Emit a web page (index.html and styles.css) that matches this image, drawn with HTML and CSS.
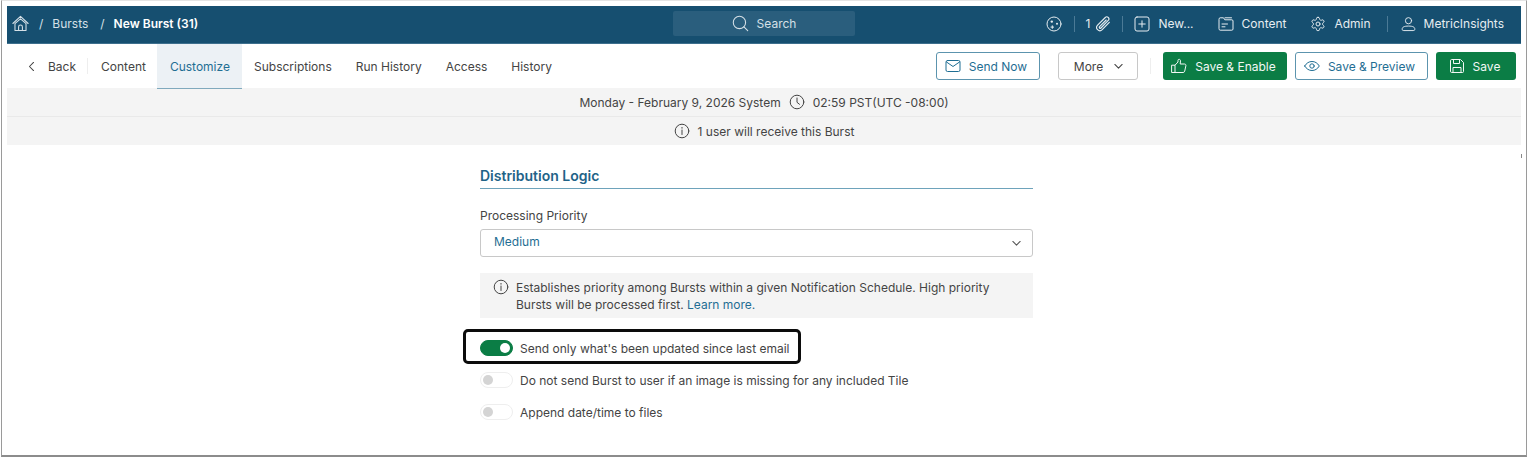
FILE: index.html
```html
<!DOCTYPE html>
<html lang="en">
<head>
    <meta charset="UTF-8">
    <title>New Burst (31)</title>
    <link rel="stylesheet" href="styles.css">
</head>
<body>
    <div class="frame">
        <header class="topbar">
            <div class="crumbs">
                <svg class="ico home" viewBox="0 0 16 16"><path d="M.8 8 8 1.300 15.200 8M3 7.800 8 3.600l5 4.200M2.800 8v6.600h10.400V8M6.200 14.600v-3.400a1.800 1.800 0 0 1 3.600 0v3.400"/></svg>
                <span class="sep">/</span>
                <span>Bursts</span>
                <span class="sep last">/</span>
                <strong>New Burst (31)</strong>
            </div>
            <div class="search">
                <svg class="ico" viewBox="0 0 16 16"><circle cx="7" cy="7" r="5.800"/><path d="m11.200 11.200 3.600 3.600"/></svg>
                <span>Search</span>
            </div>
            <nav class="toplinks">
                <svg class="ico" viewBox="0 0 16 16"><circle cx="8" cy="8" r="7"/><circle cx="5.800" cy="5.600" r="1.200" class="dot"/><circle cx="11" cy="7.800" r="1" class="dot"/><path d="M6.300 9.800v2.600M5 11.100h2.600"/></svg>
                <span class="bar"></span>
                <span class="count">1</span>
                <svg class="ico clip" viewBox="2 1 12 14"><path d="M13.500 6.500 7.300 13a2.800 2.800 0 0 1-4-4L10 2.300a1.800 1.800 0 0 1 2.600 2.600L6.200 11.500a.8.800 0 0 1-1.200-1.200L10.800 4.500"/></svg>
                <span class="bar"></span>
                <a class="toplink"><svg class="ico" viewBox="0 0 16 16"><rect x="1" y="1" width="14" height="14" rx="2"/><path d="M8 4.800v6.400M4.800 8h6.400"/></svg>New...</a>
                <a class="toplink"><svg class="ico" viewBox="0 0 16 16"><path d="M1 3a1.200 1.200 0 0 1 1.200-1.200h3.300l1.300 2h7a1.200 1.200 0 0 1 1.200 1.200v8a1.200 1.200 0 0 1-1.200 1.200H2.200A1.200 1.200 0 0 1 1 13zM7 1.800h6.500M4 8h5.500M4 10.800h3"/></svg>Content</a>
                <a class="toplink"><svg class="ico gear" viewBox="0 0 24 24"><path d="M12.220 2h-.44a2 2 0 0 0-2 2v.18a2 2 0 0 1-1 1.730l-.43.250a2 2 0 0 1-2 0l-.15-.08a2 2 0 0 0-2.730.730l-.22.380a2 2 0 0 0 .730 2.730l.15.1a2 2 0 0 1 1 1.720v.510a2 2 0 0 1-1 1.740l-.15.090a2 2 0 0 0-.730 2.730l.22.380a2 2 0 0 0 2.730.730l.15-.08a2 2 0 0 1 2 0l.43.250a2 2 0 0 1 1 1.730V20a2 2 0 0 0 2 2h.44a2 2 0 0 0 2-2v-.18a2 2 0 0 1 1-1.730l.43-.25a2 2 0 0 1 2 0l.15.08a2 2 0 0 0 2.730-.730l.22-.390a2 2 0 0 0-.730-2.730l-.15-.08a2 2 0 0 1-1-1.740v-.5a2 2 0 0 1 1-1.740l.15-.09a2 2 0 0 0 .730-2.730l-.22-.380a2 2 0 0 0-2.730-.730l-.15.08a2 2 0 0 1-2 0l-.43-.25a2 2 0 0 1-1-1.730V4a2 2 0 0 0-2-2z"/><circle cx="12" cy="12" r="3"/></svg>Admin</a>
                <span class="bar wide"></span>
                <a class="toplink user"><svg class="ico" viewBox="0 0 16 16"><circle cx="8" cy="4.500" r="3.300"/><path d="M2.500 15a1.200 1.200 0 0 1-1.200-1.200v-.6c0-1.800 2-3 6.700-3s6.700 1.200 6.700 3v.6A1.200 1.200 0 0 1 13.500 15z"/></svg>MetricInsights</a>
            </nav>
        </header>

        <div class="tabbar">
            <div class="tabs">
                <a class="back"><svg class="ico small" viewBox="0 0 16 16"><path d="M10.500 3 5.500 8l5 5"/></svg>Back</a>
                <a class="tab">Content</a>
                <a class="tab active">Customize</a>
                <a class="tab">Subscriptions</a>
                <a class="tab">Run History</a>
                <a class="tab">Access</a>
                <a class="tab">History</a>
            </div>
            <div class="actions">
                <button class="btn outline send"><svg class="ico" viewBox="0 0 16 16"><rect x="1" y="2.500" width="14" height="11" rx="1.500"/><path d="m1.500 4 6.500 4.500L14.500 4"/></svg>Send Now</button>
                <button class="btn plain">More<svg class="ico small" viewBox="0 0 16 16"><path d="m3.500 5.500 4.500 4.500 4.500-4.500"/></svg></button>
                <span class="action-sep"></span>
                <button class="btn green enable"><svg class="ico" viewBox="0 0 16 16"><path d="M1 7.200h3v7.300H1zM4 7.200l3-3.200V2.300C7 .9 9.300 1 9.500 2.600L9.200 6h4.300c1 0 1.600.8 1.400 1.700l-1.200 5.500c-.2.800-.8 1.300-1.600 1.300H4"/></svg>Save &amp; Enable</button>
                <button class="btn outline preview"><svg class="ico" viewBox="0 0 16 16"><path d="M.7 8C2.500 5 5 3.500 8 3.500S13.500 5 15.300 8c-1.800 3-4.300 4.500-7.300 4.500S2.500 11 .7 8z"/><circle cx="8" cy="8" r="2.200"/></svg>Save &amp; Preview</button>
                <button class="btn green save"><svg class="ico" viewBox="0 0 16 16"><path d="M1.500 2.500a1 1 0 0 1 1-1h9l3 3v9a1 1 0 0 1-1 1h-11a1 1 0 0 1-1-1zM4.500 1.500v4h6v-4M4 14.500V9.500h8v5"/></svg>Save</button>
            </div>
        </div>

        <div class="notice first">
            <span>Monday - February 9, 2026 System</span>
            <svg class="ico" viewBox="0 0 16 16"><circle cx="8" cy="8" r="6.800"/><path d="M8 4v4.300l2.500 2"/></svg>
            <span>02:59 PST(UTC -08:00)</span>
        </div>
        <div class="notice">
            <svg class="ico" viewBox="0 0 16 16"><circle cx="8" cy="8" r="6.800"/><path d="M8 7v4.500M8 4.400v.8"/></svg>
            <span>1 user will receive this Burst</span>
        </div>

        <main class="form">
            <h2>Distribution Logic</h2>
            <label class="field-label">Processing Priority</label>
            <div class="select">
                <span>Medium</span>
                <svg class="ico small" viewBox="0 0 16 16"><path d="m3.500 5.500 4.500 4.500 4.500-4.500"/></svg>
            </div>
            <div class="hint">
                <svg class="ico" viewBox="0 0 16 16"><circle cx="8" cy="8" r="6.800"/><path d="M8 7v4.500M8 4.400v.8"/></svg>
                <p>Establishes priority among Bursts within a given Notification Schedule. High priority Bursts will be processed first. <a>Learn more.</a></p>
            </div>
            <div class="toggle-row callout">
                <span class="toggle on"></span>
                <span>Send only what's been updated since last email</span>
            </div>
            <div class="toggle-row">
                <span class="toggle"></span>
                <span>Do not send Burst to user if an image is missing for any included Tile</span>
            </div>
            <div class="toggle-row">
                <span class="toggle"></span>
                <span>Append date/time to files</span>
            </div>
        </main>
        <span class="tick"></span>
    </div>
</body>
</html>
```

FILE: styles.css
```css
*, *::before, *::after {
    box-sizing: border-box;
}

html, body {
    margin: 0;
    height: 459px;
    overflow: hidden;
    background: #fff;
}

body {
    font-family: 'Inter', 'Liberation Sans', sans-serif;
    font-size: 12px;
    color: #444;
}

.frame {
    position: relative;
    height: 457px;
    margin: 0 1px;
    padding: 5px 5px 0 5px;
    border-top: 1px solid #e4e4e4;
    border-left: 1px solid #9a9a9a;
    border-right: 1px solid #9a9a9a;
    border-bottom: 2px solid #8c8c8c;
}

.tick {
    position: absolute;
    top: 153px;
    right: 4px;
    width: 1px;
    height: 4px;
    background: #888;
}

.ico {
    width: 16px;
    height: 16px;
    flex: none;
    fill: none;
    stroke: currentColor;
    stroke-width: 1;
    stroke-linecap: round;
    stroke-linejoin: round;
}

.ico.small {
    width: 13px;
    height: 13px;
    stroke-width: 1.300;
}

.ico.home {
    width: 17px;
    height: 17px;
}

.ico.gear {
    stroke-width: 1.500;
}

.dot {
    fill: currentColor;
    stroke: none;
}

.topbar {
    height: 38px;
    background: #164f70;
    border-bottom: 1px solid #3d6f8d;
    color: #fff;
    display: grid;
    grid-template-columns: 1fr 182px 1fr;
    align-items: center;
    padding: 0 5px 2px;
}

.crumbs {
    display: flex;
    align-items: center;
    gap: 8px;
    color: #d5e0e7;
}

.crumbs .sep {
    margin: 0 1px 0 2px;
}

.crumbs .sep.last {
    margin-left: 4px;
}

.crumbs strong {
    color: #fff;
    font-weight: 600;
}

.search {
    height: 25px;
    background: #2a5e7d;
    border-radius: 2px;
    display: flex;
    align-items: center;
    justify-content: center;
    gap: 8px;
    color: #d5e0e7;
}

.search .ico {
    width: 17px;
    height: 17px;
}

.toplinks {
    display: flex;
    align-items: center;
    justify-content: flex-end;
    padding-right: 12px;
    color: #e6edf1;
}

.toplink {
    display: flex;
    align-items: center;
    gap: 8px;
    margin-left: 24px;
}

.bar + .toplink {
    margin-left: 11px;
}

.bar + .toplink.user {
    margin-left: 13px;
}

.toplink.user .ico {
    width: 15px;
}

.bar {
    width: 1px;
    height: 16px;
    background: #4b7a96;
    margin-left: 12px;
}

.bar.wide {
    margin-left: 16px;
}

.count {
    margin-left: 11px;
}

.clip {
    width: 14px;
    margin-left: 6px;
}

.tabbar {
    height: 44px;
    display: flex;
    justify-content: space-between;
    align-items: flex-start;
}

.tabs {
    display: flex;
    height: 45px;
    align-items: stretch;
    padding-left: 18px;
}

.tabs a {
    display: flex;
    align-items: center;
    color: #444;
}

.back {
    gap: 10px;
    padding-right: 13px;
    position: relative;
}

.back::after {
    content: "";
    position: absolute;
    right: 1px;
    top: 14px;
    height: 16px;
    width: 1px;
    background: #eee;
}

.tabs .tab {
    padding: 0 12px;
}

.tabs .tab.active {
    margin-left: -1px;
    padding: 0 12px 0 13px;
    background: #ecf1f5;
    color: #1f6e93;
    border-bottom: 1px solid #7fa9bd;
}

.actions {
    display: flex;
    align-items: center;
    height: 44px;
    padding-right: 5px;
}

.btn {
    height: 28px;
    border-radius: 3px;
    font: inherit;
    display: flex;
    align-items: center;
    justify-content: center;
    gap: 8px;
    padding: 0;
    border: 1px solid transparent;
}

.btn.outline {
    background: #fff;
    border-color: #5c94ae;
    color: #1f6e93;
}

.btn.plain {
    background: #fff;
    border-color: #c8c8c8;
    color: #444;
    width: 80px;
    margin-left: 18px;
    padding-left: 3px;
    gap: 9px;
}

.btn.green {
    background: #0b7d45;
    color: #f2f8f5;
}

.send {
    width: 104px;
    padding-right: 4px;
}

.action-sep {
    width: 1px;
    height: 16px;
    background: #eee;
    margin: 0 12px;
}

.btn.enable {
    width: 124px;
    padding-right: 3px;
}

.btn.preview {
    width: 133px;
    margin-left: 8px;
    padding-right: 4px;
}

.btn.save {
    width: 80px;
    margin-left: 8px;
    padding-right: 3px;
}

.notice {
    height: 28px;
    background: #f4f4f4;
    display: flex;
    align-items: center;
    justify-content: center;
    gap: 8px;
    color: #444;
}

.notice.first {
    height: 29px;
    border-bottom: 1px solid #e9e9e9;
}

.form {
    width: 553px;
    margin: 0 auto;
    padding-top: 22px;
    position: relative;
    left: -7.500px;
}

.form h2 {
    margin: 0;
    height: 22px;
    font-size: 14px;
    line-height: 17px;
    font-weight: 600;
    color: #1f6388;
    border-bottom: 1px solid #6ea3bb;
}

.field-label {
    display: block;
    margin-top: 19px;
    line-height: 16px;
}

.select {
    height: 28px;
    margin-top: 5px;
    padding: 0 9px 0 13px;
    border: 1px solid #c8c8c8;
    border-radius: 3px;
    display: flex;
    align-items: center;
    justify-content: space-between;
    color: #1f6e93;
}

.select span {
    margin-bottom: 3px;
}

.select .ico {
    color: #555;
}

.hint {
    margin-top: 16px;
    height: 45px;
    background: #f4f4f4;
    display: flex;
    gap: 7px;
    padding: 6px 20px 0 13px;
}

.hint p {
    margin: 0;
    line-height: 17px;
}

.hint a {
    color: #1f6e93;
}

.toggle-row {
    display: flex;
    align-items: center;
    gap: 7px;
    height: 32px;
}

.toggle-row.callout {
    margin-top: 14px;
    position: relative;
}

.toggle-row.callout::before {
    content: "";
    position: absolute;
    left: -17px;
    top: -3px;
    width: 338px;
    height: 35px;
    border: 3px solid #0c0c0c;
    border-radius: 5px;
}

.toggle {
    width: 33px;
    height: 16px;
    border-radius: 8px;
    background: #fff;
    border: 1px solid #eee;
    position: relative;
}

.toggle::after {
    content: "";
    position: absolute;
    left: 2px;
    top: 2px;
    width: 10px;
    height: 10px;
    border-radius: 50%;
    background: #d4d4d4;
}

.toggle.on {
    background: #0b7d45;
    border-color: #0b7d45;
}

.toggle.on::after {
    left: auto;
    right: 2px;
    background: #fff;
}
```
